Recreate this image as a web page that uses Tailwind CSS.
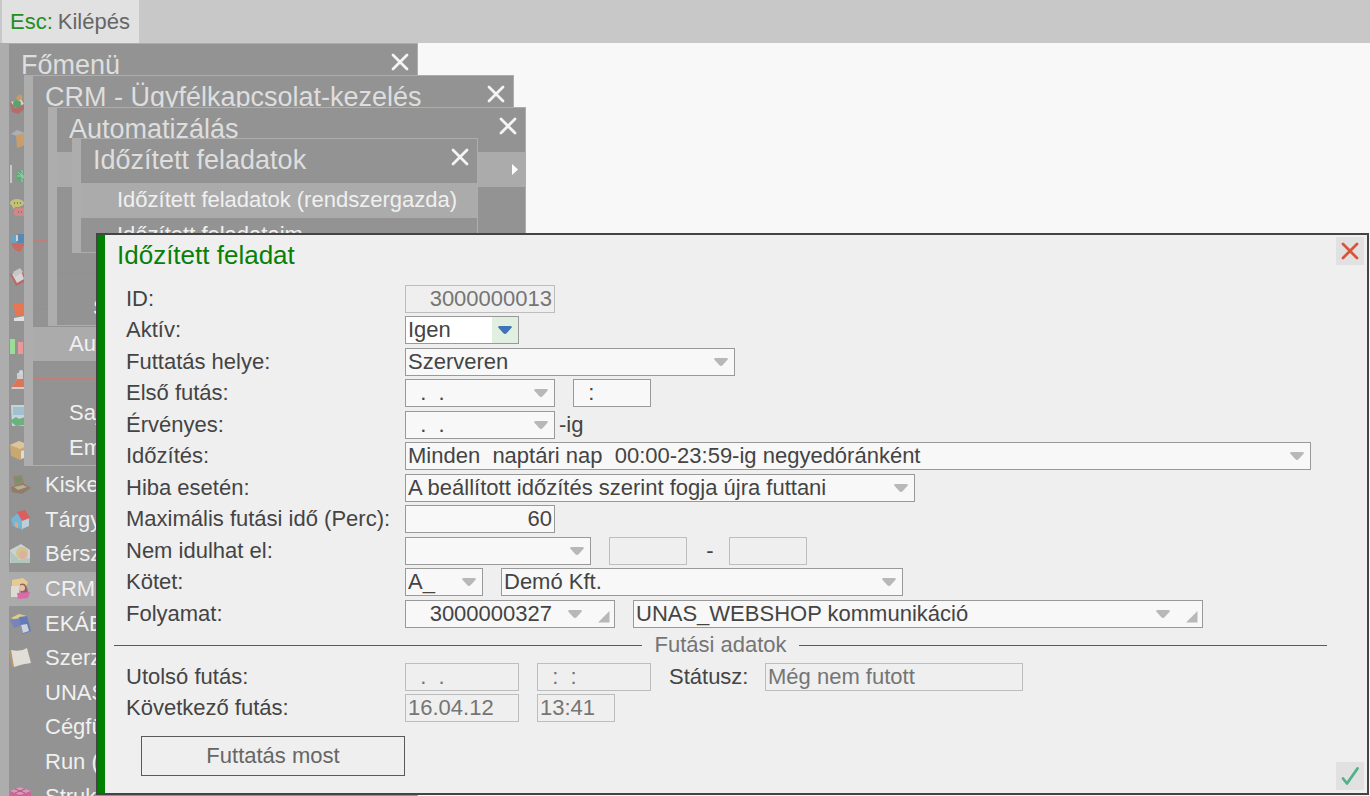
<!DOCTYPE html>
<html lang="hu">
<head>
    <meta charset="UTF-8">
    <meta name="viewport" content="width=device-width, initial-scale=1.0">
    <title>Időzített feladat</title>
    <script src="https://cdn.jsdelivr.net/npm/@tailwindcss/browser@4"></script>
</head>
<body class="h-screen flex flex-col overflow-hidden bg-[#f8f8f8] font-['Liberation_Sans',Arial,sans-serif] text-[22px] leading-7 text-[#444]">
    <!-- shared symbols -->
    <svg class="hidden">
        <symbol id="arrow" viewBox="0 0 14 8"><path d="M1.5 0h11q1.5 0 1.2 1.4L12.4 3 8.6 7.2Q7 8.6 5.4 7.2L1.6 3 .3 1.4Q0 0 1.5 0z" fill="currentColor"/></symbol>
        <symbol id="corner" viewBox="0 0 12 12"><path d="M11.5 0v11.5H0z" fill="currentColor"/></symbol>
        <symbol id="cross" viewBox="0 0 18 18"><path d="M2 2l14 14M16 2L2 16" fill="none" stroke="currentColor" stroke-width="2.8" stroke-linecap="round"/></symbol>
    </svg>

    <header class="flex h-[43px] shrink-0 bg-[#c8c8c8] pl-[2px]">
        <button class="flex items-center gap-[5px] bg-[#e1e1e1] pl-2 pr-[9px] text-[#666]"><span class="text-[#1f8f1f]">Esc:</span>Kilépés</button>
    </header>

    <main class="relative flex-1">
        <!-- Main menu -->
        <section class="absolute left-0 top-0 w-[418px] border-l-[9px] border-t border-r border-[#adadad] bg-[#939393]">
            <div class="flex h-[43px] items-start justify-between pl-3 pr-2">
                <h2 class="pt-[7px] text-[27px] text-[#dedede]">Főmenü</h2>
                <button class="mt-[9px] text-[#f4f4f4]" aria-label="Bezárás"><svg class="size-[18px]"><use href="#cross"/></svg></button>
            </div>
            <ul class="grid h-[727px] auto-rows-fr text-[#f0f0f0]">
                <li class="flex items-center"><svg class="size-6 opacity-70" viewBox="0 0 24 24"><path d="M1 11l12-3 4 8-8 6-6-2z" fill="#c65c5c"/><path d="M2 10l10-3 3 5-9 4z" fill="#eee"/><circle cx="8" cy="12" r="4" fill="#47a85c"/><path d="M7 5l5-3 2 4-5 3z" fill="#e0a050"/></svg></li>
                <li class="flex items-center"><svg class="size-6 opacity-70" viewBox="0 0 24 24"><path d="M2 7l6-4 8 3-5 4z" fill="#b6bcc5"/><path d="M2 8l5 2v10l-4-3z" fill="#8593a8"/><path d="M7 8l9-2v12l-8 3z" fill="#e0a45a"/></svg></li>
                <li class="flex items-center"><svg class="size-6 opacity-70" viewBox="0 0 24 24"><path d="M2 3v18" stroke="#ddd" stroke-width="2"/><circle cx="13" cy="14" r="6" fill="#45b96b"/><path d="M8 14h10M13 8v12M9 10l8 8" stroke="#a9e2b8"/></svg></li>
                <li class="flex items-center"><svg class="size-6 opacity-70" viewBox="0 0 24 24"><ellipse cx="8" cy="7" rx="7" ry="4" fill="#d9d765"/><path d="M3 8l1 5 4-3" fill="#d9d765"/><rect x="5" y="12" width="14" height="8" rx="3" fill="#ed8282"/><path d="M5 7h1m2 0h1m2 0h1M9 16h1m2 0h1" stroke="#777" stroke-width="2"/></svg></li>
                <li class="flex items-center"><svg class="size-6 opacity-70" viewBox="0 0 24 24"><path d="M2 4h8v10H2z" fill="#55aadc"/><path d="M8 3h8v11H8z" fill="#3e86c4"/><path d="M2 12h14l-5 9q-7-2-9-9z" fill="#e35b4e"/><path d="M8 4v6" stroke="#eee" stroke-width="2"/></svg></li>
                <li class="flex items-center"><svg class="size-6 opacity-70" viewBox="0 0 24 24"><path d="M1 9l6 12 10-5-4-10z" fill="#d05555"/><path d="M3 9l5 9 7-4-3-8z" fill="#f2f2f2"/><path d="M4 7l7-4 3 4-8 5z" fill="#ddd"/></svg></li>
                <li class="flex items-center"><svg class="size-6 opacity-80" viewBox="0 0 24 24"><path d="M4 4l14-2-2 13-9 1z" fill="#ff7043"/><path d="M5 18l11-2v5H5z" fill="#f8f2ee"/></svg></li>
                <li class="flex items-center"><svg class="size-6 opacity-80" viewBox="0 0 24 24"><path d="M1 4h5v15H1z" fill="#9df09a"/><path d="M9 7h5v12H9z" fill="#ff9a9f"/></svg></li>
                <li class="flex items-center"><svg class="size-6 opacity-80" viewBox="0 0 24 24"><path d="M8 4h6v5l5 11H2L8 10z" fill="#ddd"/><path d="M8 10h7l3 8H3z" fill="#ed704a"/><circle cx="12" cy="3" r="2" fill="#d8eef8"/></svg></li>
                <li class="flex items-center"><svg class="size-6 opacity-80" viewBox="0 0 24 24"><path d="M2 1h18v21H3z" fill="#d0e6ee"/><path d="M4 3h14v8H4z" fill="#a6cbe0"/><path d="M1 17l6-4 3 2 6-2v8l-9 1z" fill="#62b878"/></svg></li>
                <li class="flex items-center"><svg class="size-6 opacity-80" viewBox="0 0 24 24"><path d="M1 7l9-4 10 4v11l-9 4-9-4z" fill="#d6ac68"/><path d="M1 7l10 4 9-4-10-4z" fill="#edd39e"/><path d="M12 13l5-1v7l-5 2z" fill="#eee"/></svg></li>
                <li class="flex items-center gap-3"><svg class="size-6 opacity-70" viewBox="0 0 24 24"><path d="M4 3l9-1 2 8-9 3z" fill="#9c8259"/><path d="M6 5l6-1 1 4-6 2z" fill="#64945d"/><path d="M2 14l12-4 8 5-9 6-10-2z" fill="#927456"/><path d="M5 14l9-2 4 2-9 3z" fill="#c9bd9a"/></svg>Kisker</li>
                <li class="flex items-center gap-3"><svg class="size-6 opacity-80" viewBox="0 0 24 24"><path d="M2 11l8-7 4 9v9L4 18z" fill="#70bfe6"/><path d="M13 12l7-3v9l-7 3z" fill="#c3dfec"/><path d="M8 4l8-2 5 8-8 3z" fill="#f05252"/><path d="M6 14l3 1v5l-3-1z" fill="#f3b078"/></svg>Tárgyi</li>
                <li class="flex items-center gap-3"><svg class="size-6 opacity-80" viewBox="0 0 24 24"><path d="M1 8l11-6 9 6v13H1z" fill="#d9e2e4"/><circle cx="13" cy="11" r="6" fill="#e4cf8b"/><circle cx="14" cy="13" r="4" fill="#f0b9a0"/><path d="M1 9l9 8-8 4zM8 18l13-2v5H2z" fill="#bcd3c7"/></svg>Bérsz</li>
                <li class="flex items-center gap-3 bg-[#ababab]"><svg class="size-6 opacity-80" viewBox="0 0 24 24"><path d="M3 3l11-2 5 4-2 5H3z" fill="#f3d38b"/><path d="M2 9h8v11H2z" fill="#eee8dc"/><path d="M11 7q7-3 8 9l-7 1z" fill="#8a514c"/><circle cx="13" cy="11" r="3" fill="#f6c7aa"/><path d="M8 16l13-1-2 6-10 1z" fill="#e85aaa"/></svg>CRM</li>
                <li class="flex items-center gap-3"><svg class="size-6 opacity-80" viewBox="0 0 24 24"><path d="M2 6l8-4 8 2-6 6z" fill="#f0e080"/><path d="M1 8l10-2 2 7-8 3z" fill="#7281cb"/><path d="M10 5l8-1 4 15-8 3z" fill="#5976c0"/><path d="M12 13l6-1 2 7-6 2z" fill="#dde4ef"/></svg>EKÁE</li>
                <li class="flex items-center gap-3"><svg class="size-6 opacity-80" viewBox="0 0 24 24"><path d="M1 4l4 17-2-1L0 5z" fill="#d09a50"/><path d="M2 4q10 2 16-2l4 15q-9 1-17 4z" fill="#f4f1e7"/></svg>Szerz</li>
                <li class="flex items-center pl-9">UNAS</li>
                <li class="flex items-center pl-9">Cégfü</li>
                <li class="flex items-center pl-9">Run (</li>
                <li class="flex items-center gap-3"><svg class="size-6 opacity-80" viewBox="0 0 24 24"><path d="M1 6l10-4 11 4v12l-11 5-10-5z" fill="#d95b99"/><path d="M1 6l10 4 11-4-11-4z" fill="#ed9bc0"/><path d="M11 10v12M6 4l10 4M16 4L6 8" stroke="#b54882"/></svg>Struk</li>
            </ul>
        </section>

        <!-- CRM submenu -->
        <section class="absolute left-6 top-8 w-[490px] border-l-[9px] border-t border-r border-b border-[#adadad] bg-[#939393]">
            <div class="flex h-[43px] items-start justify-between pl-3 pr-2">
                <h2 class="pt-[7px] text-[27px] text-[#dedede]">CRM - Ügyfélkapcsolat-kezelés</h2>
                <button class="mt-[9px] text-[#f4f4f4]" aria-label="Bezárás"><svg class="size-[18px]"><use href="#cross"/></svg></button>
            </div>
            <ul class="grid h-[346px] auto-rows-fr text-[#f0f0f0]">
                <li></li>
                <li></li>
                <li></li>
                <li class="flex items-center"><hr class="w-full border-[#c27d76]"></li>
                <li></li>
                <li class="flex items-center"><hr class="w-full border-[#c27d76]"></li>
                <li class="flex items-center bg-[#ababab] pl-9">Aut</li>
                <li class="flex items-center"><hr class="w-full border-[#c27d76]"></li>
                <li class="flex items-center pl-9">Saj</li>
                <li class="flex items-center pl-9">Em</li>
            </ul>
        </section>

        <!-- Automation submenu -->
        <section class="absolute left-12 top-16 w-[478px] border-l-[9px] border-t border-r border-b border-[#adadad] bg-[#939393]">
            <div class="flex h-11 items-start justify-between pl-3 pr-2">
                <h2 class="pt-[7px] text-[27px] text-[#dedede]">Automatizálás</h2>
                <button class="mt-[9px] text-[#f4f4f4]" aria-label="Bezárás"><svg class="size-[18px]"><use href="#cross"/></svg></button>
            </div>
            <ul class="grid h-[173px] auto-rows-fr text-[#f0f0f0]">
                <li class="flex items-center justify-end bg-[#ababab] pr-[7px]"><svg class="h-[11px] w-[6px]" viewBox="0 0 6 11"><path d="M0 0l6 5.5L0 11z" fill="#fff"/></svg></li>
                <li></li>
                <li></li>
                <li class="flex items-center"><hr class="w-full border-[#c27d76]"></li>
                <li class="flex items-center pl-9">S</li>
            </ul>
        </section>

        <!-- Scheduled tasks submenu -->
        <section class="absolute left-[72px] top-[95px] w-[406px] border-l-[9px] border-t border-r border-b border-[#adadad] bg-[#939393]">
            <div class="flex h-11 items-start justify-between pl-3 pr-2">
                <h2 class="pt-[7px] text-[27px] text-[#dedede]">Időzített feladatok</h2>
                <button class="mt-[9px] text-[#f4f4f4]" aria-label="Bezárás"><svg class="size-[18px]"><use href="#cross"/></svg></button>
            </div>
            <ul class="grid h-[69px] auto-rows-fr text-[#f0f0f0]">
                <li class="flex items-center bg-[#ababab] pl-9">Időzített feladatok (rendszergazda)</li>
                <li class="flex items-center pl-9">Időzített feladataim</li>
            </ul>
        </section>

        <!-- Task dialog -->
        <form class="absolute bottom-px left-24 right-px top-[190px] flex flex-col border-2 border-[#444] bg-[#efefef]">
            <div class="flex flex-1 flex-col border-l-[7px] border-[#008000]">
                <div class="flex h-12 shrink-0 items-start justify-between pl-3 pr-[3px] pt-[2px]">
                    <h1 class="pt-1 text-[26px] text-[#088008]">Időzített feladat</h1>
                    <button type="button" class="grid size-7 place-items-center bg-[#e1e1e1] text-[#d8553c]" aria-label="Bezárás"><svg class="size-[18px]"><use href="#cross"/></svg></button>
                </div>

                <div class="grid h-[441px] shrink-0 auto-rows-fr pl-[21px] pr-10">
                    <div class="flex items-center">
                        <label for="id" class="w-[279px]">ID:</label>
                        <input id="id" disabled value="3000000013" class="h-7 w-[150px] border border-[#bdbdbd] px-[2px] text-right text-[#757575]">
                    </div>
                    <div class="flex items-center">
                        <label for="aktiv" class="w-[279px]">Aktív:</label>
                        <div class="relative">
                            <select id="aktiv" class="block h-7 w-[114px] appearance-none border border-[#999] bg-white pl-[2px] leading-6"><option>Igen</option><option>Nem</option></select>
                            <span class="pointer-events-none absolute inset-y-px right-px grid w-[26px] place-items-center bg-[#e0efe0] text-[#3f74b8]"><svg class="h-2 w-[14px]"><use href="#arrow"/></svg></span>
                        </div>
                    </div>
                    <div class="flex items-center">
                        <label for="hely" class="w-[279px]">Futtatás helye:</label>
                        <div class="relative">
                            <select id="hely" class="block h-7 w-[330px] appearance-none border border-[#999] bg-[#f8f8f8] pl-[2px] leading-6"><option>Szerveren</option></select>
                            <svg class="pointer-events-none absolute right-[7px] top-[10px] h-2 w-[14px] text-[#b8b8b8]"><use href="#arrow"/></svg>
                        </div>
                    </div>
                    <div class="flex items-center">
                        <label for="elso" class="w-[279px]">Első futás:</label>
                        <div class="relative mr-[18px]">
                            <input id="elso" value="  .  ." class="block h-7 w-[150px] border border-[#999] bg-[#f8f8f8] px-[2px]">
                            <svg class="pointer-events-none absolute right-[7px] top-[10px] h-2 w-[14px] text-[#b8b8b8]"><use href="#arrow"/></svg>
                        </div>
                        <input aria-label="Első futás ideje" value="  :" class="h-7 w-[78px] border border-[#999] bg-[#f8f8f8] px-[2px]">
                    </div>
                    <div class="flex items-center">
                        <label for="erv" class="w-[279px]">Érvényes:</label>
                        <div class="relative mr-1">
                            <input id="erv" value="  .  ." class="block h-7 w-[150px] border border-[#999] bg-[#f8f8f8] px-[2px]">
                            <svg class="pointer-events-none absolute right-[7px] top-[10px] h-2 w-[14px] text-[#b8b8b8]"><use href="#arrow"/></svg>
                        </div>
                        <span>-ig</span>
                    </div>
                    <div class="flex items-center">
                        <label for="idozites" class="w-[279px] shrink-0">Időzítés:</label>
                        <div class="relative w-[906px]">
                            <select id="idozites" class="block h-7 w-full appearance-none border border-[#999] bg-[#f8f8f8] pl-[2px] leading-6"><option>Minden&nbsp; naptári nap&nbsp; 00:00-23:59-ig negyedóránként</option></select>
                            <svg class="pointer-events-none absolute right-[7px] top-[10px] h-2 w-[14px] text-[#b8b8b8]"><use href="#arrow"/></svg>
                        </div>
                    </div>
                    <div class="flex items-center">
                        <label for="hiba" class="w-[279px]">Hiba esetén:</label>
                        <div class="relative">
                            <select id="hiba" class="block h-7 w-[510px] appearance-none border border-[#999] bg-[#f8f8f8] pl-[2px] leading-6"><option>A beállított időzítés szerint fogja újra futtani</option></select>
                            <svg class="pointer-events-none absolute right-[7px] top-[10px] h-2 w-[14px] text-[#b8b8b8]"><use href="#arrow"/></svg>
                        </div>
                    </div>
                    <div class="flex items-center">
                        <label for="max" class="w-[279px]">Maximális futási idő (Perc):</label>
                        <input id="max" value="60" class="h-7 w-[150px] border border-[#999] bg-[#f8f8f8] px-[2px] text-right">
                    </div>
                    <div class="flex items-center">
                        <label for="nem" class="w-[279px]">Nem idulhat el:</label>
                        <div class="relative mr-[18px]">
                            <select id="nem" class="block h-7 w-[186px] appearance-none border border-[#999] bg-[#f8f8f8] pl-[2px] leading-6"><option></option></select>
                            <svg class="pointer-events-none absolute right-[7px] top-[10px] h-2 w-[14px] text-[#b8b8b8]"><use href="#arrow"/></svg>
                        </div>
                        <input aria-label="Ettől" disabled class="h-7 w-[78px] border border-[#bdbdbd]">
                        <span class="w-[42px] pl-1 text-center">-</span>
                        <input aria-label="Eddig" disabled class="h-7 w-[78px] border border-[#bdbdbd]">
                    </div>
                    <div class="flex items-center">
                        <label for="kotet" class="w-[279px]">Kötet:</label>
                        <div class="relative mr-[18px]">
                            <select id="kotet" class="block h-7 w-[78px] appearance-none border border-[#999] bg-[#f8f8f8] pl-[2px] leading-6"><option>A_</option></select>
                            <svg class="pointer-events-none absolute right-[7px] top-[10px] h-2 w-[14px] text-[#b8b8b8]"><use href="#arrow"/></svg>
                        </div>
                        <div class="relative">
                            <select aria-label="Kötet neve" class="block h-7 w-[402px] appearance-none border border-[#999] bg-[#f8f8f8] pl-[2px] leading-6"><option>Demó Kft.</option></select>
                            <svg class="pointer-events-none absolute right-[7px] top-[10px] h-2 w-[14px] text-[#b8b8b8]"><use href="#arrow"/></svg>
                        </div>
                    </div>
                    <div class="flex items-center">
                        <label for="folyamat" class="w-[279px]">Folyamat:</label>
                        <div class="relative mr-[18px]">
                            <input id="folyamat" value="3000000327" class="block h-7 w-[210px] border border-[#999] bg-[#f8f8f8] pr-[62px] text-right">
                            <svg class="pointer-events-none absolute right-[33px] top-[10px] h-2 w-[14px] text-[#b8b8b8]"><use href="#arrow"/></svg>
                            <svg class="pointer-events-none absolute bottom-[5px] right-[5px] size-3 text-[#b8b8b8]"><use href="#corner"/></svg>
                        </div>
                        <div class="relative">
                            <input aria-label="Folyamat neve" value="UNAS_WEBSHOP kommunikáció" class="block h-7 w-[570px] border border-[#999] bg-[#f8f8f8] px-[2px]">
                            <svg class="pointer-events-none absolute right-[33px] top-[10px] h-2 w-[14px] text-[#b8b8b8]"><use href="#arrow"/></svg>
                            <svg class="pointer-events-none absolute bottom-[5px] right-[5px] size-3 text-[#b8b8b8]"><use href="#corner"/></svg>
                        </div>
                    </div>
                    <div class="-ml-3 flex items-center gap-3 text-[#757575]">
                        <hr class="flex-1 border-[#5a5a5a]">
                        <span>Futási adatok</span>
                        <hr class="flex-1 border-[#5a5a5a]">
                    </div>
                    <div class="flex items-center">
                        <label for="utolso" class="w-[279px]">Utolsó futás:</label>
                        <input id="utolso" disabled value="  .  ." class="mr-[18px] h-7 w-[114px] border border-[#bdbdbd] px-[2px] text-[#757575]">
                        <input aria-label="Utolsó futás ideje" disabled value="  :  :" class="mr-[18px] h-7 w-[114px] border border-[#bdbdbd] px-[2px] text-[#757575]">
                        <label for="statusz" class="w-24">Státusz:</label>
                        <input id="statusz" disabled value="Még nem futott" class="h-7 w-[258px] border border-[#bdbdbd] px-[2px] text-[#757575]">
                    </div>
                    <div class="flex items-center">
                        <label for="kov" class="w-[279px]">Következő futás:</label>
                        <input id="kov" disabled value="16.04.12" class="mr-[18px] h-7 w-[114px] border border-[#bdbdbd] px-[2px] text-[#757575]">
                        <input aria-label="Következő futás ideje" disabled value="13:41" class="h-7 w-[78px] border border-[#bdbdbd] px-[2px] text-[#757575]">
                    </div>
                </div>

                <div class="flex flex-1 items-end justify-between pl-9 pr-[3px] pb-[3px]">
                    <button type="button" class="mb-[14px] h-10 w-[264px] border border-[#5a5a5a] text-[#666]">Futtatás most</button>
                    <button type="submit" class="grid size-7 place-items-center bg-[#e1e1e1]" aria-label="Mentés"><svg class="size-5" viewBox="0 0 20 20"><path d="M3 12.5l4 5L17.5 2.5" fill="none" stroke="#52b08a" stroke-width="2.8" stroke-linecap="round" stroke-linejoin="round"/></svg></button>
                </div>
            </div>
        </form>
    </main>
</body>
</html>
